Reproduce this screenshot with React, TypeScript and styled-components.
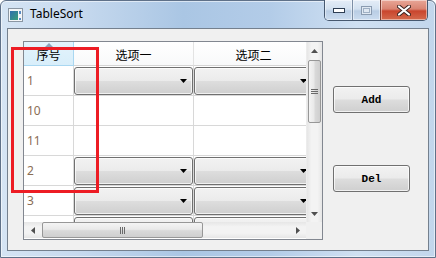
import React from 'react';
import styled, { createGlobalStyle } from 'styled-components';

const GlobalStyle = createGlobalStyle`
  html, body { margin: 0; padding: 0; background: #fff; overflow: hidden; }
  body { font-family: "Noto Sans", "Noto Sans CJK SC", sans-serif; }
`;

// --- window chrome ---
const Frame = styled.div`
  width: 436px;
  height: 258px;
  box-sizing: border-box;
  display: flex;
  flex-direction: column;
  border: 1px solid #5f7189;
  border-radius: 6px 6px 0 0;
  background: linear-gradient(90deg, #d5e4f4 0%, #c6d9ee 18%, #aac6e4 42%, #b3cce8 62%, #cfe0f2 82%, #c2d6ec 100%);
  box-shadow: inset 0 0 0 1px rgba(255, 255, 255, 0.55);
`;

const TitleBar = styled.div`
  height: 27px;
  display: flex;
  align-items: flex-start;
  flex-shrink: 0;
`;

const AppIcon = styled.svg`
  margin: 7px 0 0 7px;
  flex-shrink: 0;
`;

const Title = styled.span`
  margin: 5px 0 0 7px;
  font-family: "Noto Sans", sans-serif;
  font-size: 12px;
  line-height: 16px;
  color: #000;
`;

const CaptionGroup = styled.div`
  margin: -1px 7px 0 auto;
  height: 20px;
  display: flex;
  border: 1px solid #46586f;
  border-top: none;
  border-radius: 0 0 5px 5px;
  overflow: hidden;
`;

const CaptionButton = styled.div<{ $close?: boolean; $w: number }>`
  width: ${p => p.$w}px;
  height: 100%;
  display: flex;
  align-items: center;
  justify-content: center;
  border-left: ${p => (p.$close ? '1px solid #7a3b30' : '1px solid #7d8fa6')};
  box-shadow: inset 0 0 0 1px rgba(255, 255, 255, 0.45);
  background: ${p =>
    p.$close
      ? 'linear-gradient(#e8a697 0%, #d98472 45%, #c9452d 55%, #d46a4d 100%)'
      : 'linear-gradient(#e4edf7 0%, #d3e1f0 45%, #b9cde4 55%, #cbdcef 100%)'};
  &:first-child { border-left: none; }
`;

const Client = styled.div`
  flex: 1;
  margin: 0 6px 6px 6px;
  border: 1px solid #74808e;
  background: #f0f0f0;
  display: flex;
  align-items: flex-start;
  padding: 12px 0 0 15px;
  position: relative;
`;

// --- table view ---
const TableView = styled.div`
  width: 300px;
  height: 199px;
  box-sizing: border-box;
  border: 1px solid #828790;
  background: #fff;
  display: grid;
  grid-template-columns: 282px 16px;
  grid-template-rows: 180px 1fr;
`;

const Viewport = styled.div`
  overflow: hidden;
  background: #fff;
`;

const Row = styled.div`
  display: grid;
  grid-template-columns: 50px 120px 120px;
  width: 290px;
`;

const HeaderCell = styled.div<{ $sorted?: boolean }>`
  position: relative;
  height: 24px;
  box-sizing: border-box;
  display: flex;
  align-items: center;
  justify-content: center;
  padding-top: 2px;
  font-family: "Noto Sans CJK SC", "Noto Sans", sans-serif;
  font-size: 12px;
  color: #000;
  border-right: 1px solid ${p => (p.$sorted ? '#a9d7f1' : '#e3e3e3')};
  border-bottom: 1px solid ${p => (p.$sorted ? '#a9d7f1' : '#d5d5d5')};
  background: ${p => (p.$sorted ? 'linear-gradient(#e3f3fc, #d8eefa)' : 'linear-gradient(#ffffff, #f8f9fa)')};
`;

const SortArrow = styled.svg`
  position: absolute;
  top: 0;
  left: 50%;
  margin-left: -4px;
`;

const Cell = styled.div`
  height: 30px;
  box-sizing: border-box;
  border-right: 1px solid #d8d8d8;
  border-bottom: 1px solid #d8d8d8;
  display: flex;
  align-items: flex-start;
`;

const NumCell = styled(Cell)`
  align-items: center;
  padding-left: 3px;
  font-family: "Noto Sans", sans-serif;
  font-size: 12px;
  color: #8a6d55;
`;

const Combo = styled.div`
  margin-top: 1px;
  width: 100%;
  height: 28px;
  box-sizing: border-box;
  border: 1px solid #707070;
  border-radius: 3px;
  background: linear-gradient(#f2f2f2 0%, #ebebeb 48%, #dddddd 52%, #cfcfcf 100%);
  box-shadow: inset 0 0 0 1px rgba(255, 255, 255, 0.7);
  display: flex;
  align-items: center;
  justify-content: flex-end;
  padding-right: 5px;
`;

// --- scroll bars ---
const VScroll = styled.div`
  display: flex;
  flex-direction: column;
  background: linear-gradient(90deg, #e6e6e6, #f3f3f3 30%, #f3f3f3 70%, #e6e6e6);
  border-left: 1px solid #ececec;
  box-sizing: border-box;
`;

const HScroll = styled.div`
  display: flex;
  background: linear-gradient(#e6e6e6, #f3f3f3 30%, #f3f3f3 70%, #e6e6e6);
  height: 16px;
`;

const Corner = styled.div`
  background: #f0f0f0;
`;

const ArrowBox = styled.div<{ $h?: boolean }>`
  width: ${p => (p.$h ? '17px' : '100%')};
  height: ${p => (p.$h ? '100%' : '17px')};
  flex-shrink: 0;
  display: flex;
  align-items: center;
  justify-content: center;
`;

const Spacer = styled.div`
  flex: 1;
`;

const Thumb = styled.div<{ $h?: boolean; $len: number }>`
  ${p => (p.$h ? `width: ${p.$len}px; margin-left: 1px;` : `height: ${p.$len}px; margin: 1px 1px 0 1px;`)}
  flex-shrink: 0;
  box-sizing: border-box;
  border: 1px solid #979797;
  border-radius: 2px;
  background: ${p =>
    p.$h
      ? 'linear-gradient(#f4f4f4 0%, #e9e9e9 45%, #d9d9d9 55%, #cfcfcf 100%)'
      : 'linear-gradient(90deg, #f4f4f4 0%, #e9e9e9 45%, #d9d9d9 55%, #cfcfcf 100%)'};
  display: flex;
  align-items: center;
  justify-content: center;
`;

// --- side buttons ---
const SideColumn = styled.div`
  margin-left: 10px;
  padding-top: 45px;
  display: flex;
  flex-direction: column;
  gap: 52px;
`;

const PushButton = styled.div`
  width: 77px;
  height: 27px;
  box-sizing: border-box;
  border: 1px solid #707070;
  border-radius: 3px;
  background: linear-gradient(#f2f2f2 0%, #ebebeb 48%, #dddddd 52%, #cfcfcf 100%);
  box-shadow: inset 0 0 0 1px rgba(255, 255, 255, 0.7);
  display: flex;
  align-items: center;
  justify-content: center;
  font-family: "Liberation Mono", monospace;
  font-weight: bold;
  font-size: 11px;
  color: #000;
`;

const Highlight = styled.div`
  position: absolute;
  left: 3px;
  top: 18px;
  width: 88px;
  height: 146px;
  box-sizing: border-box;
  border: 3px solid #ed1c24;
  pointer-events: none;
`;

const rows: { num: string; combo: boolean }[] = [
  { num: '1', combo: true },
  { num: '10', combo: false },
  { num: '11', combo: false },
  { num: '2', combo: true },
  { num: '3', combo: true },
  { num: '', combo: true },
];

const DropArrow = () => (
  <svg width="7" height="4" viewBox="0 0 7 4"><path d="M0 0h7L3.5 4z" fill="#000" /></svg>
);

const Tri = ({ dir }: { dir: 'up' | 'down' | 'left' | 'right' }) => {
  const d = {
    up: 'M0 4h7L3.5 0z',
    down: 'M0 0h7L3.5 4z',
    left: 'M4 0v7L0 3.5z',
    right: 'M0 0v7L4 3.5z',
  }[dir];
  const horiz = dir === 'left' || dir === 'right';
  return (
    <svg width={horiz ? 4 : 7} height={horiz ? 7 : 4} viewBox={horiz ? '0 0 4 7' : '0 0 7 4'}>
      <path d={d} fill="#505050" />
    </svg>
  );
};

const App = () => {
  return (
    <>
      <GlobalStyle />
      <Frame>
        <TitleBar>
          <AppIcon width="15" height="14" viewBox="0 0 15 14">
            <rect x="0.5" y="0.5" width="14" height="13" fill="#f4f6f8" stroke="#8a96a3" />
            <defs>
              <linearGradient id="ig" x1="0" y1="0" x2="1" y2="1">
                <stop offset="0" stopColor="#2f6fb0" />
                <stop offset="1" stopColor="#3aa078" />
              </linearGradient>
            </defs>
            <rect x="2" y="3" width="8" height="9" fill="url(#ig)" />
            <rect x="11" y="3" width="2" height="3" fill="#5a8cc4" />
            <rect x="11" y="10" width="2" height="2" fill="#5a8cc4" />
          </AppIcon>
          <Title>TableSort</Title>
          <CaptionGroup>
            <CaptionButton $w={27}>
              <svg width="12" height="5" viewBox="0 0 12 5"><rect x="0.5" y="0.5" width="11" height="4" fill="#fff" stroke="#2d3d52" /></svg>
            </CaptionButton>
            <CaptionButton $w={27}>
              <svg width="11" height="9" viewBox="0 0 11 9">
                <rect x="0.5" y="0.5" width="10" height="8" fill="#dfe8f2" stroke="#8a9bb0" />
                <rect x="2.5" y="2.5" width="6" height="4" fill="none" stroke="#9fb0c4" />
              </svg>
            </CaptionButton>
            <CaptionButton $close $w={46}>
              <svg width="14" height="11" viewBox="0 0 14 11">
                <path d="M2 1.5L12 9.5M12 1.5L2 9.5" stroke="#3b2320" strokeWidth="4" strokeLinecap="round" />
                <path d="M2 1.5L12 9.5M12 1.5L2 9.5" stroke="#fff" strokeWidth="2.2" strokeLinecap="round" />
              </svg>
            </CaptionButton>
          </CaptionGroup>
        </TitleBar>
        <Client>
          <TableView>
            <Viewport>
              <Row>
                <HeaderCell $sorted>
                  <SortArrow width="8" height="5" viewBox="0 0 8 5"><path d="M0 5L4 1L8 5z" fill="#8aa3bb" /></SortArrow>
                  序号
                </HeaderCell>
                <HeaderCell>选项一</HeaderCell>
                <HeaderCell>选项二</HeaderCell>
              </Row>
              {rows.map((r, i) => (
                <Row key={i}>
                  <NumCell>{r.num}</NumCell>
                  <Cell>{r.combo && <Combo><DropArrow /></Combo>}</Cell>
                  <Cell>{r.combo && <Combo><DropArrow /></Combo>}</Cell>
                </Row>
              ))}
            </Viewport>
            <VScroll>
              <ArrowBox><Tri dir="up" /></ArrowBox>
              <Thumb $len={63}>
                <svg width="7" height="7" viewBox="0 0 7 7">
                  <path d="M0 1.5h7M0 3.5h7M0 5.5h7" stroke="#6a6a6a" strokeWidth="1" />
                </svg>
              </Thumb>
              <Spacer />
              <ArrowBox><Tri dir="down" /></ArrowBox>
            </VScroll>
            <HScroll>
              <ArrowBox $h><Tri dir="left" /></ArrowBox>
              <Thumb $h $len={161}>
                <svg width="7" height="7" viewBox="0 0 7 7">
                  <path d="M1.5 0v7M3.5 0v7M5.5 0v7" stroke="#6a6a6a" strokeWidth="1" />
                </svg>
              </Thumb>
              <Spacer />
              <ArrowBox $h><Tri dir="right" /></ArrowBox>
            </HScroll>
            <Corner />
          </TableView>
          <SideColumn>
            <PushButton>Add</PushButton>
            <PushButton>Del</PushButton>
          </SideColumn>
          <Highlight />
        </Client>
      </Frame>
    </>
  );
};

export default App;
